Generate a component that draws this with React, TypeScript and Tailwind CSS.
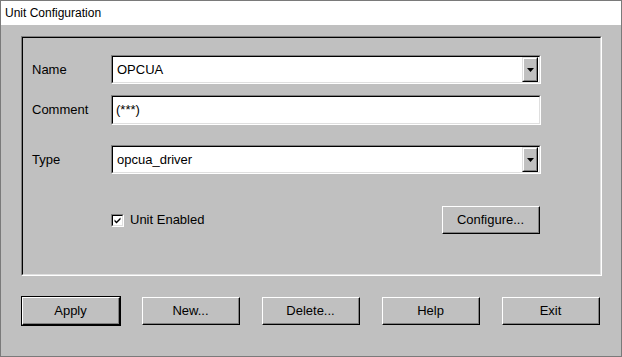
import React from "react";

const font = { fontFamily: '"Liberation Sans", Arial, sans-serif' };

function Sunken({ className = "", children }: { className?: string; children?: React.ReactNode }) {
  return (
    <div className={`border-t border-l border-t-[#808080] border-l-[#808080] border-b border-r border-b-white border-r-white ${className}`}>
      <div className="h-full w-full border-t border-l border-t-[#000] border-l-[#000] border-b border-r border-b-[#dfdfdf] border-r-[#dfdfdf] bg-white">
        {children}
      </div>
    </div>
  );
}

function Combo({ value }: { value: string }) {
  return (
    <Sunken className="h-[29px] w-[430px]">
      <div className="flex h-full items-center justify-between pl-[4px] pr-[1px]">
        <span className="text-[13px] text-black">{value}</span>
        <div className="border-t border-l border-t-[#dfdfdf] border-l-[#dfdfdf] border-b border-r border-b-black border-r-black h-[25px] w-[16px]">
          <div className="flex h-full w-full items-center justify-center border-t border-l border-t-white border-l-white border-b border-r border-b-[#808080] border-r-[#808080] bg-[#c0c0c0]">
            <svg width="7" height="4" viewBox="0 0 7 4" className="mt-[1px]">
              <path d="M0 0H7L3.5 4Z" fill="#000" />
            </svg>
          </div>
        </div>
      </div>
    </Sunken>
  );
}

function Btn({ label, def = false, w = "w-[98px]" }: { label: string; def?: boolean; w?: string }) {
  const inner = (
    <div className="h-full w-full border-t border-l border-t-white border-l-white border-b border-r border-b-black border-r-black">
      <div className="flex h-full w-full items-center justify-center border-b border-r border-b-[#808080] border-r-[#808080] bg-[#c0c0c0] text-[13px] text-black">
        {label}
      </div>
    </div>
  );
  if (def) {
    return <div className="h-[30px] w-[100px] border border-black">{inner}</div>;
  }
  return <div className={`h-[28px] ${w}`}>{inner}</div>;
}

export default function App() {
  return (
    <div style={font} className="flex h-[357px] w-[622px] flex-col border border-[#7a7a7a] bg-[#c0c0c0] text-black">
      <div className="flex h-[24px] items-center bg-white pl-[4px] text-[12px]">Unit Configuration</div>
      <div className="flex flex-1 flex-col pl-[20px] pt-[11px]">
        <div className="h-[240px] w-[581px] border-t border-l border-t-[#808080] border-l-[#808080] border-b border-r border-b-white border-r-white">
          <div className="flex h-full w-full flex-col border-t border-l border-t-black border-l-black border-b border-r border-b-[#dfdfdf] border-r-[#dfdfdf] pl-[9px] pt-[17px]">
            <div className="flex items-center">
              <div className="w-[79px] text-[13px]">Name</div>
              <Combo value="OPCUA" />
            </div>
            <div className="mt-[11px] flex items-center">
              <div className="w-[79px] text-[13px]">Comment</div>
              <Sunken className="h-[30px] w-[430px]">
                <div className="flex h-full items-center pl-[3px] text-[13px]">(***)</div>
              </Sunken>
            </div>
            <div className="mt-[20px] flex items-center">
              <div className="w-[79px] text-[13px]">Type</div>
              <Combo value="opcua_driver" />
            </div>
            <div className="mt-[32px] flex h-[28px] w-[508px] items-center">
              <div className="ml-[79px] flex items-center">
                <Sunken className="h-[13px] w-[13px]">
                  <svg width="9" height="9" viewBox="0 0 9 9" className="block">
                    <path d="M1.5 3.5 L3.5 5.5 L7.5 1.5 L7.5 3.5 L3.5 7.5 L1.5 5.5 Z" fill="#000" />
                  </svg>
                </Sunken>
                <span className="ml-[6px] text-[13px]">Unit Enabled</span>
              </div>
              <div className="ml-auto">
                <Btn label="Configure..." />
              </div>
            </div>
          </div>
        </div>
        <div className="mt-[20px] flex h-[30px] items-center gap-[20px]">
          <Btn label="Apply" def />
          <div className="flex h-[30px] w-[100px] items-center justify-center"><Btn label="New..." /></div>
          <div className="flex h-[30px] w-[100px] items-center justify-center"><Btn label="Delete..." /></div>
          <div className="flex h-[30px] w-[100px] items-center justify-center"><Btn label="Help" /></div>
          <div className="flex h-[30px] w-[100px] items-center justify-center"><Btn label="Exit" /></div>
        </div>
      </div>
    </div>
  );
}
